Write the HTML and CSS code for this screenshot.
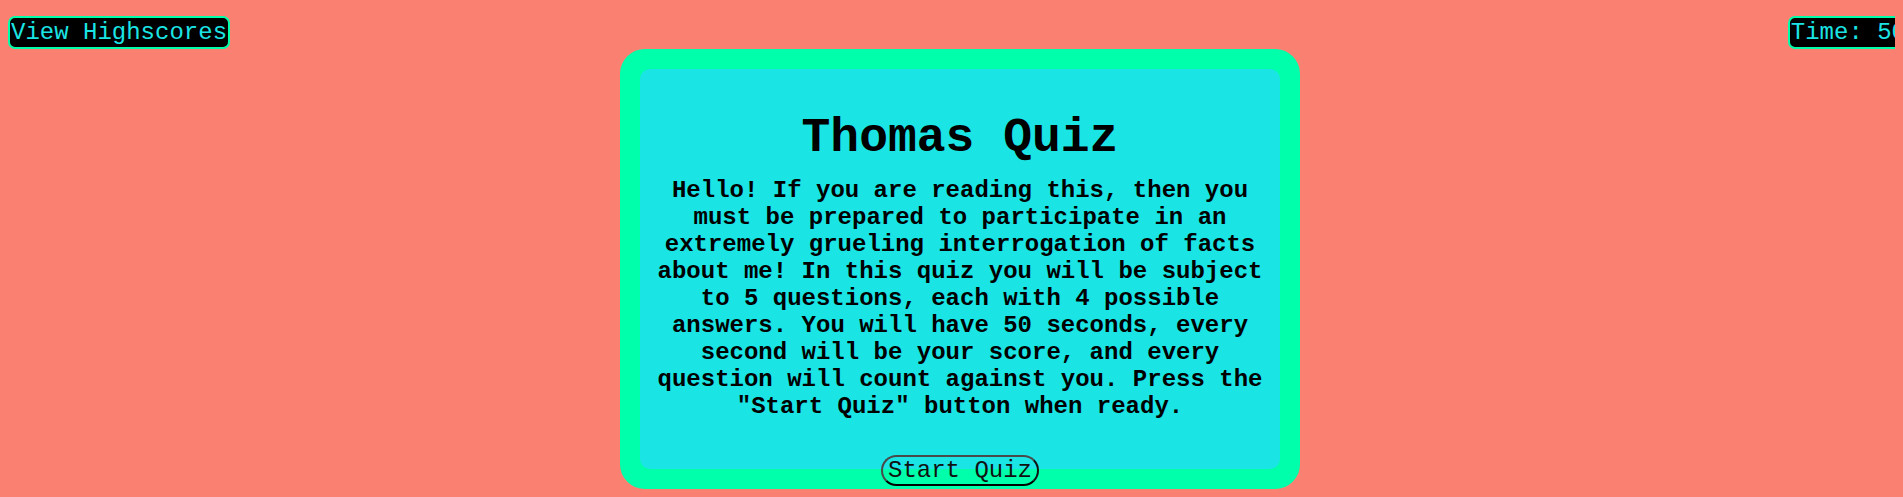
FILE: index.html
```html
<!DOCTYPE html>
<html lang="en">
<head>
<meta charset="utf-8">
<title>Thomas Quiz</title>
<link rel="stylesheet" href="styles.css">
</head>
<body>
<div class="page">
  <header class="topbar">
    <button class="pill">View Highscores</button>
    <div class="pill timer">Time: 50</div>
  </header>
  <main class="frame">
    <section class="card">
      <h1 class="title">Thomas Quiz</h1>
      <p class="intro">Hello! If you are reading this, then you must be prepared to participate in an extremely grueling interrogation of facts about me! In this quiz you will be subject to 5 questions, each with 4 possible answers. You will have 50 seconds, every second will be your score, and every question will count against you. Press the "Start Quiz" button when ready.</p>
      <button class="start">Start Quiz</button>
    </section>
  </main>
</div>
</body>
</html>
```

FILE: styles.css
```css
html {
  overflow: hidden;
}
body {
  margin: 8px;
  background: #fa8072;
  font-family: "Courier New", Courier, "Nimbus Mono PS", "Nimbus Mono L", FreeMono, "Liberation Mono", monospace;
  font-size: 24px;
  color: #000;
}
.page {
  width: 1904px;
}
.topbar {
  display: flex;
  justify-content: space-between;
  align-items: flex-start;
  padding-top: 8px;
}
.pill {
  flex: none;
  font-family: inherit;
  font-size: 24px;
  line-height: 27px;
  background: #000;
  color: #1be4e4;
  border: 2px solid #00ffaa;
  border-radius: 7px;
  padding: 1px;
  margin: 0;
}
.timer {
  margin-right: 3px;
}
.frame {
  width: 640px;
  margin: 0 auto;
  border: 20px solid #00ffaa;
  border-radius: 25px;
  background: #00ffaa;
}
.card {
  box-sizing: border-box;
  height: 400px;
  padding-top: 42px;
  background: #1be4e4;
  border-radius: 10px;
  text-align: center;
}
.title {
  margin: 0;
  font-size: 48px;
  line-height: 54px;
  font-weight: bold;
}
.intro {
  margin: 12px 0 0;
  font-weight: bold;
  line-height: 27px;
}
.start {
  margin-top: 35px;
  font-family: inherit;
  font-size: 24px;
  line-height: 27px;
  color: #111;
  background: transparent;
  padding: 0 5px;
  border: 2px solid;
  border-color: #4a4a4a #111 #000 #4a4a4a;
  border-radius: 16px;
}
```
